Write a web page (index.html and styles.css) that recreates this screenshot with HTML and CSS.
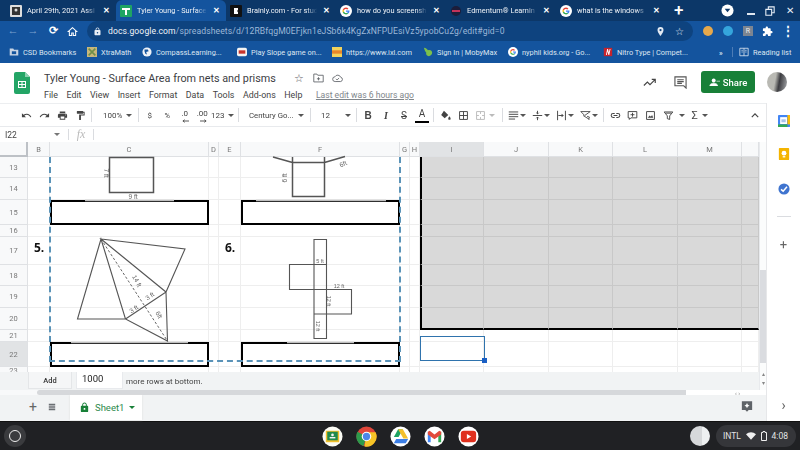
FILE: index.html
```html
<!DOCTYPE html>
<html lang="en">
<head>
    <meta charset="UTF-8">
    <title>Tyler Young - Surface Area from nets and prisms</title>
    <link rel="stylesheet" href="styles.css">
</head>
<body>
<svg class="defs" aria-hidden="true">
    <symbol id="i-undo" viewBox="0 0 24 24"><path d="M12.5 8c-2.65 0-5.05.99-6.9 2.6L2 7v9h9l-3.62-3.62c1.39-1.16 3.16-1.88 5.12-1.88 3.54 0 6.55 2.31 7.6 5.5l2.37-.78C21.08 11.03 17.15 8 12.5 8z"/></symbol>
    <symbol id="i-redo" viewBox="0 0 24 24"><path d="M18.4 10.6C16.55 8.99 14.15 8 11.5 8c-4.65 0-8.58 3.03-9.96 7.22L3.9 16c1.05-3.19 4.05-5.5 7.6-5.5 1.95 0 3.73.72 5.12 1.88L13 16h9V7l-3.6 3.6z"/></symbol>
    <symbol id="i-print" viewBox="0 0 24 24"><path d="M19 8H5c-1.66 0-3 1.34-3 3v6h4v4h12v-4h4v-6c0-1.66-1.34-3-3-3zm-3 11H8v-5h8v5zm3-7c-.55 0-1-.45-1-1s.45-1 1-1 1 .45 1 1-.45 1-1 1zm-1-9H6v4h12V3z"/></symbol>
    <symbol id="i-paint" viewBox="0 0 24 24"><path d="M18 4V3c0-.55-.45-1-1-1H5c-.55 0-1 .45-1 1v4c0 .55.45 1 1 1h12c.55 0 1-.45 1-1V6h1v4H9v11c0 .55.45 1 1 1h2c.55 0 1-.45 1-1v-9h8V4h-3z"/></symbol>
    <symbol id="i-lock" viewBox="0 0 24 24"><path d="M18 8h-1V6c0-2.76-2.24-5-5-5S7 3.24 7 6v2H6c-1.1 0-2 .9-2 2v10c0 1.1.9 2 2 2h12c1.1 0 2-.9 2-2V10c0-1.1-.9-2-2-2zm-6 9c-1.1 0-2-.9-2-2s.9-2 2-2 2 .9 2 2-.9 2-2 2zm3-9H9V6c0-1.66 1.34-3 3-3s3 1.34 3 3v2z"/></symbol>
    <symbol id="i-puzzle" viewBox="0 0 24 24"><path d="M20.5 11H19V7c0-1.1-.9-2-2-2h-4V3.5C13 2.12 11.88 1 10.5 1S8 2.12 8 3.5V5H4c-1.1 0-2 .9-2 2v3.8h1.5c1.49 0 2.7 1.21 2.7 2.7s-1.21 2.7-2.7 2.7H2V20c0 1.1.9 2 2 2h3.8v-1.5c0-1.49 1.21-2.7 2.7-2.7s2.7 1.21 2.7 2.7V22H17c1.1 0 2-.9 2-2v-4h1.5c1.38 0 2.5-1.12 2.5-2.5S21.88 11 20.5 11z"/></symbol>
    <symbol id="i-g" viewBox="0 0 24 24">
        <circle cx="12" cy="12" r="12" fill="#fff"/>
        <path d="M12 5a7 7 0 0 1 4.8 1.9l-2 2A4.2 4.2 0 0 0 7.9 11L5.600 9A7 7 0 0 1 12 5z" fill="#ea4335"/>
        <path d="M5.600 9 7.900 11a4.200 4.200 0 0 0 0 2l-2.300 2a7 7 0 0 1 0-6z" fill="#fbbc05"/>
        <path d="M5.600 15l2.300-2a4.200 4.200 0 0 0 6.400 2.300l2.200 1.800A7 7 0 0 1 5.600 15z" fill="#34a853"/>
        <path d="M12 11h7c.2 2.400-.6 4.500-2.500 6.100l-2.200-1.800c.7-.5 1.200-1.200 1.400-2H12z" fill="#4285f4"/>
    </symbol>
</svg>

<div class="tabstrip">
    <div class="tab"><svg class="fav" viewBox="0 0 12 12"><rect width="12" height="12" rx="1" fill="#ddd"/><rect x="2" y="2" width="8" height="8" fill="#333"/><circle cx="6" cy="5" r="1.500" fill="#ddd"/></svg><span class="tab-title">April 29th, 2021 Assi</span><span class="tab-x">✕</span></div>
    <div class="tab active"><svg class="fav" viewBox="0 0 12 12"><rect width="12" height="12" rx="1" fill="#1fa463"/><path d="M2 3h8v2H7v5H5V5H2z" fill="#fff"/></svg><span class="tab-title">Tyler Young - Surface</span><span class="tab-x">✕</span></div>
    <div class="tab"><svg class="fav" viewBox="0 0 12 12"><rect width="12" height="12" rx="1" fill="#111"/><path d="M4 3h4v2L7 6l1 1v2H4z" fill="#fff"/></svg><span class="tab-title">Brainly.com - For stud</span><span class="tab-x">✕</span></div>
    <div class="tab"><svg class="fav"><use href="#i-g"/></svg><span class="tab-title">how do you screensh</span><span class="tab-x">✕</span></div>
    <div class="tab"><svg class="fav" viewBox="0 0 12 12"><circle cx="6" cy="6" r="5" fill="#1d1d3a"/><rect x="2" y="5" width="8" height="2" fill="#c2335a"/></svg><span class="tab-title">Edmentum® Learnin</span><span class="tab-x">✕</span></div>
    <div class="tab"><svg class="fav"><use href="#i-g"/></svg><span class="tab-title">what is the windows</span><span class="tab-x">✕</span></div>
    <span class="tab-new">+</span>
    <div class="win-btns">
        <svg class="win-profile" viewBox="0 0 14 14"><circle cx="7" cy="7" r="6.500" fill="#fff"/><path d="M4 5h6L7 9z" fill="#0c3768"/></svg>
        <span class="win-min"></span>
        <svg class="win-max" viewBox="0 0 12 12"><path d="M1 4h7v7H1zM4 4V1h7v7H8" fill="none" stroke="#e8eef6" stroke-width="1.300"/></svg>
        <span class="win-close">✕</span>
    </div>
</div>

<div class="omnibar">
    <span class="nav dim">←</span>
    <span class="nav dim">→</span>
    <span class="nav">⟳</span>
    <svg class="nav-home" viewBox="0 0 14 14"><path d="M7 2 1.500 7H3v5h3V9h2v3h3V7h1.500z" fill="none" stroke="#fff" stroke-width="1.300"/></svg>
    <div class="url">
        <svg class="url-lock"><use href="#i-lock"/></svg>
        <span class="url-text"><b>docs.google.com</b>/spreadsheets/d/12RBfqgM0EFjkn1eJSb6k4KgZxNFPUEsiVz5ypobCu2g/edit#gid=0</span>
        <svg class="url-pin" viewBox="0 0 12 14"><path d="M6 1a4 4 0 0 0-4 4c0 3 4 8 4 8s4-5 4-8a4 4 0 0 0-4-4zm0 5.500A1.500 1.500 0 1 1 6 3.500a1.500 1.500 0 0 1 0 3z" fill="#e3eaf3"/></svg>
        <span class="url-star">☆</span>
    </div>
    <span class="ext ext-orange"></span>
    <span class="ext ext-blue"></span>
    <span class="ext-r">R</span>
    <svg class="ext-puzzle"><use href="#i-puzzle"/></svg>
    <span class="ext-more">⋮</span>
</div>

<div class="bookmarks">
    <span class="bm bm-csd"><svg class="bm-ico" viewBox="0 0 14 12"><path d="M1 1h5l1 2h6v8H1z" fill="#c8d4e4"/><rect x="4" y="5" width="6" height="4" fill="#14549e"/></svg>CSD Bookmarks</span>
    <span class="bm bm-xtra"><svg class="bm-ico" viewBox="0 0 12 12"><rect width="12" height="12" fill="#c9b77a"/><path d="m2 2 8 8M10 2l-8 8" stroke="#6f8f4a" stroke-width="2"/></svg>XtraMath</span>
    <span class="bm bm-compass"><svg class="bm-ico" viewBox="0 0 12 12"><circle cx="6" cy="6" r="5.500" fill="#eef2f7"/><path d="M3 3h4l1 2-3 1 1 3-2-1-1-3z" fill="#14549e"/></svg>CompassLearning...</span>
    <span class="bm bm-slope"><svg class="bm-ico" viewBox="0 0 12 12"><rect y="1" width="12" height="10" rx="2" fill="#f3f3f3"/><rect x="2" y="4" width="8" height="4" fill="#c8342c"/></svg>Play Slope game on...</span>
    <span class="bm bm-ixl"><svg class="bm-ico" viewBox="0 0 12 12"><rect width="12" height="12" fill="#f2d25c"/><rect y="4" width="12" height="4" fill="#e8862a"/></svg>https://www.ixl.com</span>
    <span class="bm bm-moby"><svg class="bm-ico" viewBox="0 0 12 12"><path d="M1 1c3 0 4 2 5 3 3-1 5 1 5 3s-2 4-4 4-4-2-3-4C3 6 2 4 1 1z" fill="#7cc04b"/></svg>Sign In | MobyMax</span>
    <span class="bm bm-nyphil"><svg class="bm-ico"><use href="#i-g"/></svg>nyphil kids.org - Go...</span>
    <span class="bm bm-nitro"><svg class="bm-ico" viewBox="0 0 12 12"><rect x="1" y="1" width="10" height="10" fill="#c8232c"/><path d="M3.500 9.500 5 2.500h1l1 4 1-4h1L7.500 9.500h-1l-1-4-1 4z" fill="#fff"/></svg>Nitro Type | Compet...</span>
    <span class="bm-over">»</span>
    <span class="bm bm-read"><svg class="bm-ico" viewBox="0 0 12 12"><path d="M1 1.500h10v9H1zM6 1.500v9M3 4h1.500M3 6h1.500M7.500 4H9M7.500 6H9" fill="none" stroke="#dbe4ef"/></svg>Reading list</span>
</div>

<header class="doc-head">
    <svg class="doc-logo" viewBox="0 0 16 22"><path d="M2 0h9l5 5v15a2 2 0 0 1-2 2H2a2 2 0 0 1-2-2V2a2 2 0 0 1 2-2z" fill="#23a566"/><path d="M11 0l5 5h-5z" fill="#8ed1b1"/><path d="M4 9h8v7H4zm1 1v2h2.500v-2zm3.500 0v2H11v-2zM5 13v2h2.500v-2zm3.500 0v2H11v-2z" fill="#fff" fill-rule="evenodd"/></svg>
    <div class="doc-info">
        <div class="doc-title-row">
            <span class="doc-title">Tyler Young - Surface Area from nets and prisms</span>
            <span class="doc-star">☆</span>
            <svg class="doc-ico" viewBox="0 0 14 12"><path d="M1 1h4l1 1.500h7V11H1zM7 5v4M5 7h4" fill="none" stroke="#5f6368" stroke-width="1.100"/></svg>
            <svg class="doc-ico" viewBox="0 0 14 12"><path d="M4 10.500a3 3 0 0 1-.3-6A4 4 0 0 1 11 5a2.800 2.800 0 0 1 0 5.500zM5 7l1.500 1.500L9 6" fill="none" stroke="#5f6368" stroke-width="1.100"/></svg>
        </div>
        <nav class="menu">
            <span>File</span><span>Edit</span><span>View</span><span>Insert</span><span>Format</span><span>Data</span><span>Tools</span><span>Add-ons</span><span>Help</span>
            <a class="last-edit">Last edit was 6 hours ago</a>
        </nav>
    </div>
    <div class="doc-actions">
        <svg class="act-trend" viewBox="0 0 16 10"><path d="M1 9 5 5l3 3 6-6M10 2h4v4" fill="none" stroke="#444" stroke-width="1.300"/></svg>
        <svg class="act-comment" viewBox="0 0 14 14"><path d="M1 1h12v12l-2.500-2.500H1zM3.500 4h7M3.500 6h7M3.500 8h5" fill="none" stroke="#555" stroke-width="1.200"/></svg>
        <button class="share"><svg class="share-ico" viewBox="0 0 14 10"><circle cx="6" cy="3" r="2.500" fill="#fff"/><path d="M1 10c0-2.500 2.500-3.500 5-3.500s5 1 5 3.500zM9.500 4H14" fill="#fff" stroke="#fff" stroke-width=".8"/></svg>Share</button>
        <span class="avatar"></span>
    </div>
</header>

<div class="workspace">
    <div class="doc">
        <div class="toolbar">
            <span class="tb w17"><svg class="ic"><use href="#i-undo"/></svg></span>
            <span class="tb w18"><svg class="ic"><use href="#i-redo"/></svg></span>
            <span class="tb w17"><svg class="ic"><use href="#i-print"/></svg></span>
            <span class="tb w18"><svg class="ic"><use href="#i-paint"/></svg></span>
            <i class="sep"></i>
            <span class="tb tb-zoom">100%<em class="caret"></em></span>
            <i class="sep"></i>
            <span class="tb w17">$</span>
            <span class="tb w17 tb-small">%</span>
            <span class="tb w17 tb-dec">.0<svg class="dec-arrow" viewBox="0 0 8 4"><path d="M8 2H2M3 .5 1 2l2 1.500" fill="none" stroke="#444"/></svg></span>
            <span class="tb w17 tb-dec">.00<svg class="dec-arrow" viewBox="0 0 8 4"><path d="M0 2h6M5 .5 7 2 5 3.500" fill="none" stroke="#444"/></svg></span>
            <span class="tb tb-123">123<em class="caret"></em></span>
            <i class="sep"></i>
            <span class="tb tb-font">Century Go...<em class="caret"></em></span>
            <i class="sep"></i>
            <span class="tb tb-size">12<em class="caret"></em></span>
            <i class="sep"></i>
            <span class="tb w18 tb-bold">B</span>
            <span class="tb w18 tb-italic">I</span>
            <span class="tb w18 tb-strike">S</span>
            <span class="tb w18 tb-color">A</span>
            <i class="sep"></i>
            <span class="tb w18"><svg class="ic" viewBox="0 0 14 14"><path d="M5 1 1.500 6.500 6 10.500l4.500-4zM12 8c-1 1.500-1.500 2-1.500 3a1.500 1.500 0 0 0 3 0c0-1-.5-1.500-1.500-3z"/></svg></span>
            <span class="tb w18"><svg class="ic" viewBox="0 0 14 14"><path d="M2 2h10v10H2zM7 2v10M2 7h10" fill="none" stroke="#444" stroke-width="1.200"/></svg></span>
            <span class="tb tb-merge"><svg class="ic" viewBox="0 0 14 14"><path d="M2 2h10v10H2zM7 2v3M7 9v3M2 7h3M9 7h3" fill="none" stroke="#bbb" stroke-width="1.200"/></svg><em class="caret off"></em></span>
            <i class="sep"></i>
            <span class="tb tb-drop"><svg class="ic" viewBox="0 0 14 14"><path d="M1 2.500h12M1 5.500h12M1 8.500h12M1 11.500h8" fill="none" stroke="#444" stroke-width="1.200"/></svg><em class="caret"></em></span>
            <span class="tb tb-drop"><svg class="ic" viewBox="0 0 14 14"><path d="M1 7h12M7 1v4M5.500 3.500 7 5l1.500-1.500M7 13V9M5.500 10.500 7 9l1.500 1.500" fill="none" stroke="#444" stroke-width="1.200"/></svg><em class="caret"></em></span>
            <span class="tb tb-drop"><svg class="ic" viewBox="0 0 14 14"><path d="M2 1v12M12 1v12M3 7h6M7 5l2 2-2 2" fill="none" stroke="#444" stroke-width="1.200"/></svg><em class="caret"></em></span>
            <span class="tb tb-drop"><svg class="ic" viewBox="0 0 14 14"><path d="M1 2h12L6 7zM4 7l8 5M9 8l3 1-1 3" fill="none" stroke="#444" stroke-width="1.100"/></svg><em class="caret"></em></span>
            <i class="sep"></i>
            <span class="tb w18"><svg class="ic" viewBox="0 0 14 14"><path d="M6 4.500H4a2.500 2.500 0 0 0 0 5h2M8 4.500h2a2.500 2.500 0 0 1 0 5H8M4.500 7h5" fill="none" stroke="#444" stroke-width="1.300"/></svg></span>
            <span class="tb w17"><svg class="ic" viewBox="0 0 14 14"><path d="M1.500 2h11v8H5l-2 2v-2H1.500zM7 3.500v5M4.500 6h5" fill="none" stroke="#444" stroke-width="1.200"/></svg></span>
            <span class="tb w18"><svg class="ic" viewBox="0 0 14 14"><path d="M2 2h10v10H2z" fill="none" stroke="#444" stroke-width="1.200"/><path d="m3.500 10 2.500-3 1.500 1.500L9 6.500l1.500 3.500z"/></svg></span>
            <span class="tb tb-filter"><svg class="ic" viewBox="0 0 14 14"><path d="M1.500 2.500h11L8.500 7.500V12l-3-1V7.500zM3.500 4h7" fill="none" stroke="#444" stroke-width="1.200"/></svg><em class="caret"></em></span>
            <span class="tb tb-sigma">Σ<em class="caret"></em></span>
            <svg class="tb-collapse" viewBox="0 0 10 6"><path d="M1 5 5 1l4 4" fill="none" stroke="#444" stroke-width="1.500"/></svg>
        </div>

        <div class="formula">
            <span class="cell-name">I22</span><em class="caret"></em>
            <i class="sep"></i>
            <span class="fx">fx</span>
            <i class="sep"></i>
        </div>

        <div class="sheet-row">
            <div class="sheet-col">
                <div class="grid">
                    <table class="cells">
                        <colgroup><col class="c-h"><col class="c-b"><col class="c-w"><col class="c-n"><col class="c-b"><col class="c-w"><col class="c-n"><col class="c-n"><col class="c-i"><col class="c-j"><col class="c-i"><col class="c-j"><col class="c-i"><col class="c-l"></colgroup>
                        <tr class="r-head"><th class="corner"></th><th>B</th><th>C</th><th>D</th><th>E</th><th>F</th><th>G</th><th>H</th><th class="on">I</th><th>J</th><th>K</th><th>L</th><th>M</th><th></th></tr>
                        <tr class="r21"><th>13</th><td></td><td></td><td></td><td></td><td></td><td></td><td></td><td class="g g1"></td><td class="g"></td><td class="g"></td><td class="g"></td><td class="g"></td><td class="g"></td></tr>
                        <tr class="r22"><th>14</th><td></td><td></td><td></td><td></td><td></td><td></td><td></td><td class="g g1"></td><td class="g"></td><td class="g"></td><td class="g"></td><td class="g"></td><td class="g"></td></tr>
                        <tr class="r25"><th>15</th><td></td><td class="box"></td><td></td><td></td><td class="box"></td><td></td><td></td><td class="g g1"></td><td class="g"></td><td class="g"></td><td class="g"></td><td class="g"></td><td class="g"></td></tr>
                        <tr class="r12"><th>16</th><td></td><td></td><td></td><td></td><td></td><td></td><td></td><td class="g g1"></td><td class="g"></td><td class="g"></td><td class="g"></td><td class="g"></td><td class="g"></td></tr>
                        <tr class="r28"><th>17</th><td class="num">5.</td><td></td><td></td><td class="num">6.</td><td></td><td></td><td></td><td class="g g1"></td><td class="g"></td><td class="g"></td><td class="g"></td><td class="g"></td><td class="g"></td></tr>
                        <tr class="r21"><th>18</th><td></td><td></td><td></td><td></td><td></td><td></td><td></td><td class="g g1"></td><td class="g"></td><td class="g"></td><td class="g"></td><td class="g"></td><td class="g"></td></tr>
                        <tr class="r22"><th>19</th><td></td><td></td><td></td><td></td><td></td><td></td><td></td><td class="g g1"></td><td class="g"></td><td class="g"></td><td class="g"></td><td class="g"></td><td class="g"></td></tr>
                        <tr class="r22"><th>20</th><td></td><td></td><td></td><td></td><td></td><td></td><td></td><td class="g g1 gb"></td><td class="g gb"></td><td class="g gb"></td><td class="g gb"></td><td class="g gb"></td><td class="g gb"></td></tr>
                        <tr class="r12"><th>21</th><td></td><td></td><td></td><td></td><td></td><td></td><td></td><td></td><td></td><td></td><td></td><td></td><td></td></tr>
                        <tr class="r25"><th class="on">22</th><td></td><td class="box"></td><td></td><td></td><td class="box"></td><td></td><td></td><td></td><td></td><td></td><td></td><td></td><td></td></tr>
                        <tr class="r21"><th class="r-cut">23</th><td></td><td></td><td></td><td></td><td></td><td></td><td></td><td></td><td></td><td></td><td></td><td></td><td></td></tr>
                    </table>

                    <svg class="art" viewBox="0 142 759 230">
                        <!-- grey gaps on top of the answer boxes -->
                        <g class="gaps">
                            <path d="M85 200.500H174M256 200.500H386M71 342.500H188M287 342.500H354"/>
                        </g>
                        <!-- problem 4 -->
                        <g class="shape">
                            <path d="M109.500 157.500H153.500V192.500H109.500Z"/>
                            <path d="M292.500 157V196.500H324.500V157M292.500 162.500H324.500M292.500 162.500 273 157M324.500 162.500 345 156.500"/>
                        </g>
                        <text class="lbl" transform="translate(104 173) rotate(90)" text-anchor="middle">7 ft</text>
                        <text class="lbl" x="133" y="199" text-anchor="middle">9 ft</text>
                        <text class="lbl" transform="translate(287 178) rotate(-90)" text-anchor="middle">6 ft</text>
                        <text class="lbl" transform="translate(344 166) rotate(-25)" text-anchor="middle">6ft</text>
                        <!-- problem 5 -->
                        <g class="shape thin">
                            <path d="M101 239 185 249 166 292ZM101 239 77.500 319H125.500ZM125.500 319 166 292 167.500 341ZM101 239 166 292"/>
                            <path class="dash" d="M101 239 167.500 341"/>
                        </g>
                        <text class="lbl" transform="translate(135 282) rotate(62)" text-anchor="middle">14 ft</text>
                        <text class="lbl" transform="translate(135 311) rotate(-32)" text-anchor="middle">3 ft</text>
                        <text class="lbl" transform="translate(151 298) rotate(-32)" text-anchor="middle">3 ft</text>
                        <text class="lbl" transform="translate(157 316) rotate(62)" text-anchor="middle">6ft</text>
                        <!-- problem 6 -->
                        <g class="shape thin">
                            <path d="M314 239.500H326.500V338.500H314ZM314 264.500H289.500V289.500H351.500V314H314M314 264.500H326.500M326.500 289.500V314"/>
                        </g>
                        <text class="lbl sm" x="320" y="263" text-anchor="middle">5 ft</text>
                        <text class="lbl sm" x="339" y="288" text-anchor="middle">12 ft</text>
                        <text class="lbl sm" transform="translate(327 301) rotate(90)" text-anchor="middle">12 ft</text>
                        <text class="lbl sm" transform="translate(316 326) rotate(90)" text-anchor="middle">12 ft</text>
                    </svg>

                    <div class="print-edge"></div>
                    <div class="selection"><span class="handle"></span></div>
                </div>

                <div class="add-row">
                    <button class="add-btn">Add</button>
                    <span class="add-input">1000</span>
                    <span class="add-text">more rows at bottom.</span>
                </div>
            </div>
            <div class="vscroll">
                <span class="vthumb"></span>
                <span class="varrows">▴<br>▾</span>
            </div>
        </div>

        <div class="hscroll">
            <span class="hthumb"></span>
            <span class="harrows">‹ ›</span>
        </div>

        <div class="sheet-tabs">
            <span class="st-add">+</span>
            <svg class="st-all" viewBox="0 0 10 10"><path d="M1 1h8v1.500H1zM1 3.200h8v1.500H1zM1 5.400h8v1.500H1zM1 7.600h8v1.500H1z" fill="#6b6f73"/></svg>
            <div class="st-tab"><svg class="st-lock"><use href="#i-lock"/></svg>Sheet1<em class="caret green"></em></div>
            <svg class="st-explore" viewBox="0 0 14 14"><path d="M1 1h12v10H9l-2 2-2-2H1z" fill="#5f6368"/><path d="m7 3 1 2 2 1-2 1-1 2-1-2-2-1 2-1z" fill="#fff"/></svg>
        </div>
    </div>

    <aside class="side">
        <svg class="side-cal" viewBox="0 0 14 14"><rect width="14" height="14" rx="1" fill="#4285f4"/><rect x="11" width="3" height="11" fill="#fbbc04"/><rect y="11" width="11" height="3" fill="#34a853"/><rect x="2.500" y="2.500" width="8" height="8" fill="#fff"/><rect x="4" y="5" width="5" height="3.500" fill="#a9c3ea"/></svg>
        <svg class="side-keep" viewBox="0 0 12 14"><rect width="12" height="14" rx="1" fill="#f4b400"/><circle cx="6" cy="6" r="2.800" fill="#fff"/><rect x="4.500" y="9.500" width="3" height="1.500" fill="#fff"/></svg>
        <svg class="side-tasks" viewBox="0 0 14 14"><circle cx="7" cy="7" r="6.500" fill="#3f74cf"/><path d="m3.500 7.500 2.500 2 4.500-5" fill="none" stroke="#fff" stroke-width="1.800"/></svg>
        <span class="side-rule"></span>
        <span class="side-plus">+</span>
        <span class="side-more">›</span>
    </aside>
</div>

<footer class="shelf">
    <div class="shelf-left"><span class="launcher"></span></div>
    <div class="shelf-apps">
        <span class="app"><svg viewBox="0 0 22 22"><circle cx="11" cy="11" r="10.500" fill="#fbfbf5"/><rect x="4" y="5" width="14" height="12" fill="#f1bf2c"/><rect x="5.500" y="6" width="11" height="9" fill="#1f8a4c"/><circle cx="11" cy="9.300" r="1.400" fill="#f4f4f4"/><rect x="8" y="11.500" width="6" height="1.500" fill="#f4f4f4"/></svg></span>
        <span class="app"><svg viewBox="0 0 22 22"><circle cx="11" cy="11" r="10.500" fill="#e0463a"/><path d="M11 11 1.500 6A10.500 10.500 0 0 0 8 21z" fill="#2d9a4c"/><path d="M11 6.500h9.500A10.500 10.500 0 0 1 9 21.400z" fill="#f6c426"/><circle cx="11" cy="11" r="5" fill="#fff"/><circle cx="11" cy="11" r="3.800" fill="#4b86e8"/></svg></span>
        <span class="app"><svg viewBox="0 0 22 22"><circle cx="11" cy="11" r="10.500" fill="#fff"/><path d="M8.500 3.500h5L9 11.500H4z" fill="#1fa463"/><path d="M13.500 3.500 19 13h-5L8.500 3.500z" fill="#f5c02c"/><path d="M6.500 13.500H19l-2.500 4.500H4z" fill="#3c7fe6"/></svg></span>
        <span class="app"><svg viewBox="0 0 22 22"><circle cx="11" cy="11" r="10.500" fill="#fff"/><path d="M4 6v11h3V9.500z" fill="#4285f4"/><path d="M18 6v11h-3V9.500z" fill="#34a853"/><path d="M4 6l2-1 5 4 5-4 2 1v3l-7 5-7-5z" fill="#e24a3b"/></svg></span>
        <span class="app"><svg viewBox="0 0 22 22"><circle cx="11" cy="11" r="10.500" fill="#fff"/><rect x="3" y="5" width="16" height="12" rx="3" fill="#e0301e"/><path d="m9.300 8.500 4.500 2.500-4.500 2.500z" fill="#fff"/></svg></span>
    </div>
    <div class="shelf-right">
        <span class="holding"></span>
        <div class="status">
            <span>INTL</span>
            <svg class="st-wifi" viewBox="0 0 12 9"><path d="M6 9 0 2.500C3.500-.8 8.500-.8 12 2.500z" fill="#f0f0f0"/></svg>
            <svg class="st-batt" viewBox="0 0 6 10"><path d="M2 .5h2v1h1.500v8h-5v-8H2z" fill="none" stroke="#eee"/></svg>
            <span>4:08</span>
        </div>
    </div>
</footer>
</body>
</html>
```

FILE: styles.css
```css
* { box-sizing: border-box; }
html, body { margin: 0; height: 100%; }
body {
    width: 800px; height: 450px; overflow: hidden;
    display: flex; flex-direction: column;
    font-family: Roboto, "Liberation Sans", Arial, sans-serif;
    background: #fff; color: #3c4043;
    filter: blur(0.45px);
}
.defs { position: absolute; width: 0; height: 0; }
em { font-style: normal; }
.caret { display: inline-block; width: 0; height: 0; border-left: 3px solid transparent; border-right: 3px solid transparent; border-top: 3px solid #555; }
.caret.off { border-top-color: #bbb; }
.caret.green { border-top-color: #188038; margin-left: 5px; }

/* browser chrome */
.tabstrip { height: 21px; flex: none; background: #0c3768; display: flex; align-items: center; padding-left: 6px; color: #eef2f7; font-size: 7.400px; }
.tab { width: 110px; height: 21px; padding: 0 3px 0 4px; display: flex; align-items: center; border-radius: 6px 6px 0 0; }
.tab.active { background: #14549e; }
.fav { width: 12px; height: 12px; flex: none; margin-right: 5px; }
.tab-title { flex: 1; white-space: nowrap; overflow: hidden; -webkit-mask-image: linear-gradient(to right, #000 85%, transparent); mask-image: linear-gradient(to right, #000 85%, transparent); }
.tab-x { font-size: 8px; width: 14px; text-align: center; font-weight: bold; color: #fff; margin-left: 2px; }
.tab-new { font-size: 17px; margin-left: 8px; font-weight: 500; line-height: 21px; color: #fff; }
.win-btns { margin-left: auto; display: flex; align-items: center; padding-right: 6px; }
.win-profile { width: 13px; height: 13px; margin-right: 13px; }
.win-min { width: 8px; height: 2px; background: #dfe6ef; margin: 6px 10px 0 0; }
.win-max { width: 10px; height: 10px; margin-right: 11px; }
.win-close { font-size: 10px; color: #e8eef6; }

.omnibar { height: 20px; flex: none; background: #14549e; display: flex; align-items: center; padding-left: 3px; color: #fff; }
.nav { width: 20px; text-align: center; font-size: 11px; font-weight: bold; line-height: 20px; }
.nav.dim { color: #7fa3cf; }
.nav-home { width: 11px; height: 11px; margin-left: 4px; }
.url { width: 606px; height: 20px; margin-left: 9px; background: #0e437f; border-radius: 10px; display: flex; align-items: center; padding: 0 6px 0 6px; font-size: 8.600px; letter-spacing: .1px; color: #9db8d8; }
.url b { font-weight: 400; color: #f0f4f9; }
.url-lock { width: 9px; height: 9px; fill: #e8eef6; margin-right: 6px; flex: none; }
.url-text { flex: 1; white-space: nowrap; overflow: hidden; }
.url-pin { width: 9px; height: 11px; margin-right: 10px; flex: none; }
.url-star { color: #e8eef6; font-size: 10px; width: 12px; }
.ext { width: 10px; height: 10px; border-radius: 50%; margin-left: 10px; }
.ext-orange { background: #e6a84b; }
.ext-blue { background: #35a5dc; }
.ext-r { width: 10px; height: 10px; background: #7c8591; font-size: 7px; line-height: 10px; text-align: center; margin-left: 10px; color: #eee; }
.ext-puzzle { width: 11px; height: 11px; fill: #fff; margin-left: 9px; }
.ext-more { margin-left: 9px; font-size: 12px; font-weight: bold; }

.bookmarks { height: 22px; flex: none; background: #14549e; display: flex; align-items: center; padding-left: 9px; color: #dde6f1; font-size: 7.400px; white-space: nowrap; }
.bm { display: flex; align-items: center; flex: none; }
.bm-ico { width: 10px; height: 10px; margin-right: 4px; flex: none; }
.bm-csd { width: 78px; }
.bm-xtra { width: 55px; }
.bm-compass { width: 95px; }
.bm-slope { width: 95px; }
.bm-ixl { width: 91px; }
.bm-moby { width: 85px; }
.bm-nyphil { width: 95px; }
.bm-nitro { width: 116px; }
.bm-over { width: 13px; font-weight: bold; }
.bm-read { padding-left: 6px; border-left: 1px solid #4d7cb6; }

/* document header */
.doc-head { height: 40px; flex: none; display: flex; padding: 7px 13px 0 14px; background: #fff; }
.doc-logo { width: 16px; height: 22px; margin-top: 2px; flex: none; }
.doc-info { margin-left: 14px; }
.doc-title-row { display: flex; align-items: center; height: 16px; font-size: 10.800px; color: #3c4043; }
.doc-title { width: 239px; white-space: nowrap; }
.doc-star { width: 12px; margin-left: 11px; font-size: 11px; color: #5f6368; }
.doc-ico { width: 11px; height: 10px; margin-left: 7px; }
.doc-ico + .doc-ico { margin-left: 8px; }
.menu { display: flex; font-size: 8.900px; margin-top: 4px; color: #444; white-space: nowrap; }
.menu span { margin-right: 8.500px; }
.last-edit { margin-left: 5px; font-size: 8.600px; color: #80868b; text-decoration: underline; }
.doc-actions { margin-left: auto; display: flex; align-items: center; height: 24px; }
.act-trend { width: 14px; height: 10px; margin-right: 17px; }
.act-comment { width: 13px; height: 13px; margin-right: 14px; }
.share { width: 54px; height: 22px; border: 0; border-radius: 3px; background: #188038; color: #fff; font: 500 9.500px Roboto, sans-serif; display: flex; align-items: center; justify-content: center; padding: 0; }
.share-ico { width: 11px; height: 8px; margin-right: 3px; }
.avatar { width: 20px; height: 20px; border-radius: 50%; margin-left: 12px; background: linear-gradient(100deg, #b9b9b3 40%, #3c3c40 60%, #8d8f92 90%); }

/* document body */
.workspace { flex: 1; min-height: 0; display: flex; }
.doc { width: 766px; display: flex; flex-direction: column; background: #f1f3f4; }
.toolbar { height: 24px; flex: none; background: #fff; border-top: 1px solid #eceef0; border-bottom: 1px solid #e8eaed; display: flex; align-items: center; padding-left: 18px; font-size: 8px; color: #444; white-space: nowrap; }
.sep { width: 1px; height: 14px; flex: none; background: #dadce0; margin: 0 2px; }
.tb { height: 20px; flex: none; display: flex; align-items: center; justify-content: center; position: relative; }
.w17 { width: 17.500px; }
.w18 { width: 18px; }
.ic { width: 11px; height: 11px; fill: #444; }
.tb-zoom { width: 42px; justify-content: space-between; padding: 0 4px 0 9px; }
.tb-123 { width: 25px; justify-content: space-between; padding-right: 2px; }
.tb-small { font-size: 7.500px; }
.tb-dec { padding-bottom: 4px; }
.dec-arrow { position: absolute; width: 7px; height: 4px; bottom: 2px; left: 6px; }
.tb-font { width: 67px; justify-content: space-between; padding: 0 4px 0 8px; font-size: 7.800px; }
.tb-size { width: 41px; justify-content: space-between; padding: 0 3px 0 8px; }
.tb-bold { font: bold 10px "Liberation Sans", sans-serif; }
.tb-italic { font: italic bold 10px "Liberation Serif", serif; }
.tb-strike { font-size: 10px; text-decoration: line-through; }
.tb-color { font-size: 10px; padding-bottom: 3px; }
.tb-color::after { content: ""; position: absolute; left: 2px; right: 2px; bottom: 2px; height: 2px; background: #000; }
.tb-merge { width: 28px; justify-content: space-between; padding: 0 5px 0 3px; }
.tb-drop { width: 24px; justify-content: space-between; padding: 0 3px 0 3px; }
.tb-filter { width: 28px; justify-content: space-between; padding: 0 3px; }
.tb-sigma { width: 25px; justify-content: space-between; padding: 0 5px 0 4px; font-size: 11px; }
.tb-collapse { width: 8px; height: 5px; margin-left: auto; margin-right: 7px; }

.formula { height: 15px; flex: none; background: #fff; display: flex; align-items: center; padding-left: 5px; font-size: 8.500px; color: #444; }
.cell-name { width: 49px; }
.formula .sep { height: 11px; margin: 0; }
.formula .caret { margin-right: 8px; border-top-color: #777; }
.fx { width: 24px; text-align: center; font: italic 12px "Liberation Serif", serif; color: #bbb; }

.sheet-row { height: 248px; flex: none; display: flex; }
.sheet-col { width: 759px; display: flex; flex-direction: column; }
.grid { height: 230px; position: relative; overflow: hidden; background: #fff; flex: none; }
.cells { width: 759px; table-layout: fixed; border-collapse: separate; border-spacing: 0; }
.c-h { width: 28px; }
.c-b { width: 22px; }
.c-w { width: 159px; }
.c-n { width: 10px; }
.c-i { width: 64px; }
.c-j { width: 65px; }
.c-l { width: 17px; }
.cells th { background: #f8f9fa; border-right: 1px solid #dfe1e4; border-bottom: 1px solid #dfe1e4; font: 7.500px Roboto, sans-serif; color: #777; padding: 0; overflow: hidden; }
.cells th.on { background: #e1e3e5; }
.cells th.r-cut { vertical-align: top; line-height: 7px; }
.cells td { border-right: 1px solid #eeeeee; border-bottom: 1px solid #eeeeee; padding: 0; }
.r-head { height: 15px; }
.r12 { height: 12px; }
.r21 { height: 21px; }
.r22 { height: 22px; }
.r25 { height: 25px; }
.r28 { height: 28px; }
.cells th.corner { border-right: 2px solid #bdc1c6; border-bottom: 2px solid #bdc1c6; }
.cells td.g { background: #d9d9d9; border-color: #c8c8c8; }
.cells td.g1 { border-left: 2px solid #000; }
.cells td.gb { border-bottom: 2px solid #000; }
.cells td.box { border: 2px solid #000; }
.cells td.num { font: bold 12px "Open Sans", sans-serif; color: #111; vertical-align: top; text-align: left; padding: 2px 0 0 6px; }
.art { position: absolute; left: 0; top: 0; width: 759px; height: 230px; pointer-events: none; }
.gaps path { fill: none; stroke: #bfbfbf; stroke-width: 1.500; }
.shape path { fill: none; stroke: #555; stroke-width: 1.500; }
.shape.thin path { stroke-width: 1.100; }
.shape path.dash { stroke-dasharray: 2.500 2; stroke-width: .900; }
.lbl { font: 6.500px "Liberation Sans", sans-serif; fill: #666; }
.lbl.sm { font-size: 5.500px; }
.print-edge { position: absolute; left: 49px; top: 15px; width: 352px; height: 205px; border: 0 dashed #5a93b8; border-width: 0 2px 2px 2px; }
.selection { position: absolute; left: 420px; top: 194px; width: 65px; height: 25px; border: 1px solid #2f73ad; }
.handle { position: absolute; right: -3px; bottom: -3px; width: 5px; height: 5px; background: #1a5fc4; }

.add-row { height: 18px; flex: none; display: flex; align-items: flex-start; padding-left: 28px; background: #f1f3f4; font-size: 8px; }
.add-btn { width: 44px; height: 17px; border: 1px solid #e4e6e8; border-top: 0; background: #f5f6f7; font: 500 7.500px Roboto, sans-serif; color: #333; padding: 0; }
.add-input { width: 47px; height: 17px; margin-left: 4px; background: #fff; border: 1px solid #e8eaed; border-top: 0; padding: 1px 0 0 5px; font-size: 9.500px; color: #222; }
.add-text { margin: 5px 0 0 3px; color: #444; white-space: nowrap; }
.vscroll { width: 7px; background: #fbfcfc; border-left: 1px solid #e8eaed; display: flex; flex-direction: column; align-items: stretch; }
.vthumb { height: 93px; margin-top: 128px; background: #dadce0; }
.varrows { margin-top: 6px; font-size: 6px; line-height: 9px; text-align: center; color: #888; }
.hscroll { height: 5px; flex: none; display: flex; background: #f8f9fa; padding-left: 37px; align-items: center; }
.hthumb { width: 649px; height: 5px; background: #d6d8db; border-radius: 3px 0 0 3px; }
.harrows { flex: 1; background: #fff; height: 5px; text-align: right; font-size: 6px; line-height: 5px; color: #777; padding-right: 26px; }
.sheet-tabs { flex: 1; display: flex; align-items: flex-start; background: #f1f3f4; padding-left: 29px; position: relative; }
.st-add { width: 10px; font-size: 14px; line-height: 24px; color: #666; }
.st-all { width: 8px; height: 8px; margin: 8px 0 0 9px; }
.st-tab { width: 72px; height: 25px; margin-left: 14px; background: #fff; display: flex; align-items: center; padding-left: 9px; font-size: 9.500px; color: #2c8a4c; box-shadow: 0 0 2px #ddd; }
.st-lock { width: 11px; height: 11px; fill: #188038; margin-right: 5px; }
.st-explore { position: absolute; left: 741px; top: 5px; width: 12px; height: 13px; }

.side { width: 34px; background: #fff; border-left: 1px solid #e6e7e9; position: relative; display: flex; flex-direction: column; align-items: center; }
.side-cal { width: 12px; height: 12px; margin-top: 12px; }
.side-keep { width: 12px; height: 12px; margin-top: 21px; }
.side-tasks { width: 12px; height: 12px; margin-top: 23px; }
.side-rule { width: 14px; height: 1px; background: #dadce0; margin-top: 21px; }
.side-plus { font-size: 13px; line-height: 13px; margin-top: 21px; color: #666; }
.side-more { margin-top: auto; margin-bottom: 9px; font-size: 14px; line-height: 14px; color: #666; }

/* chromebook shelf */
.shelf { height: 29px; flex: none; background: #202124; display: grid; grid-template-columns: 1fr auto 1fr; align-items: center; border-top: 1px solid #111; color: #e8eaed; }
.shelf-left { padding-left: 4px; }
.launcher { display: flex; width: 22px; height: 22px; border-radius: 50%; background: #3a3b3e; align-items: center; justify-content: center; }
.launcher::after { content: ""; width: 10px; height: 10px; border: 1.500px solid #eee; border-radius: 50%; }
.shelf-apps { display: flex; gap: 13px; }
.app { width: 21px; height: 21px; display: block; }
.app svg { width: 21px; height: 21px; display: block; }
.shelf-right { display: flex; justify-content: flex-end; align-items: center; padding-right: 4px; }
.holding { width: 20px; height: 20px; border-radius: 50%; background: linear-gradient(90deg, #d6d8da 60%, #eef0f1 60%); margin-right: 6px; }
.status { width: 80px; height: 22px; border-radius: 11px; background: #35363a; display: flex; align-items: center; justify-content: space-between; padding: 0 8px 0 7px; font-size: 8.500px; color: #e3e4e6; }
.st-wifi { width: 10px; height: 8px; }
.st-batt { width: 6px; height: 10px; }
```
